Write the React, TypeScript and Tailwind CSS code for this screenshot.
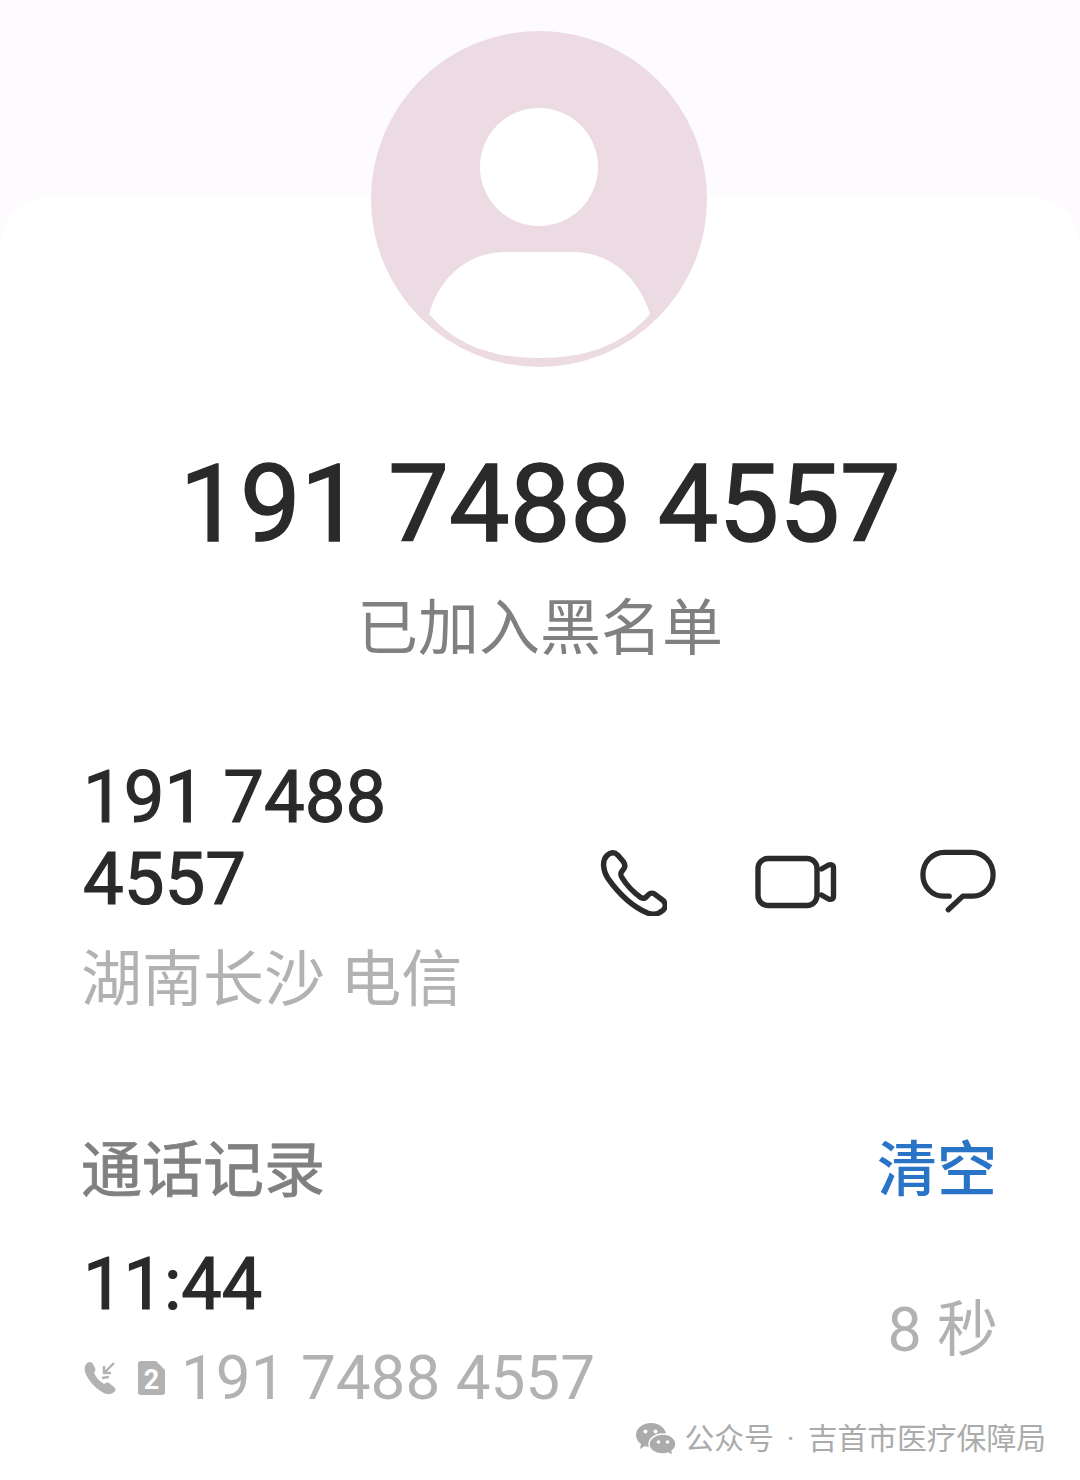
const cjk = "font-['Roboto','Noto_Sans_CJK_SC',sans-serif]";

function Avatar() {
  return (
    <svg width="336" height="336" viewBox="0 0 336 336" className="block">
      <circle cx="168" cy="168" r="168" fill="#ecdbe2" />
      <circle cx="168" cy="136" r="59" fill="#fff" />
      <path d="M58 283 C68 248 95 221 135 221 L201 221 C241 221 268 248 279 283 C250 316 212 327 168 327 C124 327 87 316 58 283 Z" fill="#fff" />
    </svg>
  );
}

function PhoneIcon() {
  return (
    <svg width="68" height="68" viewBox="0 0 70 70" fill="none" stroke="#2b2b2b" strokeWidth="5.6" strokeLinejoin="round" className="block">
      <path d="M8 7 C12 3 16 3 19 6 L25 13 C27 16 27 19 25 21 L23 24 C22 26 22 27 24 30 C29 38 36 45 43 50 C45 51 47 51 48 50 L51 47 C53 45 56 45 58 47 L66 53 C69 56 69 60 66 63 L63 65 C59 68 55 68 50 66 C36 60 21 47 9 30 C4 22 3 12 8 7 Z" transform="translate(0 1)" />
    </svg>
  );
}

function VideoIcon() {
  return (
    <svg width="83" height="54" viewBox="0 0 82 54" fill="none" stroke="#2b2b2b" strokeWidth="5.4" strokeLinejoin="round" className="block">
      <rect x="3.5" y="3.5" width="59" height="47" rx="10" />
      <path d="M67 14 L74 10 C77 9 79 10 79 13 L79 41 C79 44 77 45 74 44 L67 40" strokeLinecap="round" />
    </svg>
  );
}

function ChatIcon() {
  return (
    <svg width="76" height="67" viewBox="0 0 78 68" fill="none" stroke="#2b2b2b" strokeWidth="5.4" strokeLinecap="round" strokeLinejoin="round" className="block">
      <path d="M30 48 L24 48 C12 48 3 38 3 26 C3 13 13 3 25 3 L53 3 C65 3 75 13 75 26 C75 38 66 48 54 48 L44 48 L29 62" />
    </svg>
  );
}

function IncomingIcon() {
  return (
    <svg width="36" height="36" viewBox="0 0 36 36" className="block">
      <path d="M4 3 C6 1 9 2 10 4 L12 8 C13 10 12 11 11 13 C13 17 16 21 21 24 C23 23 24 22 26 23 L31 27 C33 29 33 31 31 32 C28 35 24 35 19 32 C11 27 5 20 2 12 C1 8 2 5 4 3 Z" fill="#b2b2b2" />
      <path d="M31 3 L21 13 M21 6 L21 13 L28 13 M19 18 L26 17" stroke="#b2b2b2" strokeWidth="2.4" fill="none" />
    </svg>
  );
}

function SimIcon() {
  return (
    <svg width="30" height="36" viewBox="0 0 30 36" className="block">
      <path d="M4 1 L19 1 L28 10 L28 32 C28 34 27 35 25 35 L4 35 C2 35 1 34 1 32 L1 4 C1 2 2 1 4 1 Z" fill="#b2b2b2" />
      <text x="14.5" y="29" textAnchor="middle" fontSize="27" fontWeight="700" fill="#fff" fontFamily="Roboto, sans-serif">2</text>
    </svg>
  );
}

function WeChatIcon() {
  return (
    <svg width="42" height="34" viewBox="0 0 42 34" className="block">
      <path d="M16 1 C7 1 1 7 1 13 C1 17 3 20 6 22 L5 27 L10 24 C12 25 14 25 16 25 C25 25 31 19 31 13 C31 7 25 1 16 1 Z" fill="#ababab" />
      <path d="M28 12 C20 12 14 17 14 22 C14 28 20 32 28 32 C30 32 31 32 33 31 L38 34 L37 29 C40 27 41 25 41 22 C41 17 36 12 28 12 Z" fill="#ababab" stroke="#fff" strokeWidth="1.5" />
      <circle cx="10.5" cy="9.5" r="2" fill="#fff" />
      <circle cx="20.5" cy="9.5" r="2" fill="#fff" />
      <circle cx="23.5" cy="20" r="1.8" fill="#fff" />
      <circle cx="32.5" cy="20" r="1.8" fill="#fff" />
    </svg>
  );
}

export default function App() {
  return (
    <div className={`w-[1080px] h-[1480px] overflow-hidden bg-[#fdfbfd] ${cjk}`}>
      <div className="h-[197px]" />
      <div className="flow-root h-[1283px] rounded-t-[50px] bg-white">
        <div className="flex justify-center -mt-[166px] -translate-x-px relative">
          <Avatar />
        </div>

        <div className="mt-[77px] text-center text-[108px] leading-[120px] font-normal [-webkit-text-stroke:1.5px_#2a2a2a] text-[#2a2a2a] h-[120px]">
          191 7488 4557
        </div>
        <div className="mt-[25px] text-center text-[61px] leading-[80px] text-[#808080]">已加入黑名单</div>

        <div className="mt-[88px] pl-[83px] pr-[84px] flex items-start justify-between">
          <div className="w-[420px]">
            <div className="text-[72.5px] leading-[82px] font-normal [-webkit-text-stroke:1.2px_#2a2a2a] text-[#2a2a2a]">191 7488<br />4557</div>
            <div className="mt-[21px] -ml-[2px] text-[61px] leading-[76px] text-[#b2b2b2]">湖南长沙 电信</div>
          </div>
          <div className="flex items-center gap-[87px] mt-[91px]">
            <PhoneIcon />
            <div className="flex items-center gap-[83px]">
              <VideoIcon />
              <ChatIcon />
            </div>
          </div>
        </div>

        <div className="mt-[113px] pl-[81px] pr-[83px] flex items-center justify-between">
          <div className="text-[61px] leading-[80px] text-[#808080] [-webkit-text-stroke:0.8px_#808080]">通话记录</div>
          <div className="text-[60px] leading-[80px] text-[#2a74c8] font-medium">清空</div>
        </div>

        <div className="mt-[29px] pl-[83px] pr-[82px] flex items-center justify-between">
          <div>
            <div className="text-[72px] leading-[90px] font-normal [-webkit-text-stroke:1.2px_#2a2a2a] text-[#2a2a2a]">11:44</div>
            <div className="mt-[13px] flex items-center">
              <IncomingIcon />
              <div className="ml-[18px]"><SimIcon /></div>
              <span className="ml-[14px] text-[62px] leading-[70px] text-[#b2b2b2]">191 7488 4557</span>
            </div>
          </div>
          <div className="text-[61px] leading-[80px] text-[#b2b2b2] mt-[7px]">8 秒</div>
        </div>

        <div className="mt-[6px] pr-[34px] flex items-center justify-end gap-[7px]">
          <WeChatIcon />
          <span className="text-[29.8px] leading-[40px] text-[#ababab]">公众号<span className="mx-[13px]">·</span>吉首市医疗保障局</span>
        </div>
      </div>
    </div>
  );
}
